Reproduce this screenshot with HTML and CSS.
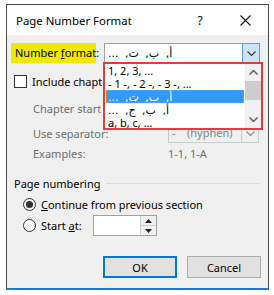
FILE: index.html
```html
<!DOCTYPE html>
<html>
<head>
<meta charset="utf-8">
<link rel="stylesheet" href="styles.css">
</head>
<body>
<div class="window">
  <div class="titlebar">
    <span class="title">Page Number Format</span>
    <span class="help">?</span>
    <span class="close"><svg width="11" height="11" viewBox="0 0 11 11"><path d="M0.5 0.5 L10.5 10.5 M10.5 0.5 L0.5 10.5" stroke="#111" stroke-width="1.1" fill="none"/></svg></span>
  </div>
  <div class="content">
    <div class="row format-row">
      <span class="hl-label">Number <u>f</u>ormat:</span>
      <div class="combo main-combo">
        <span class="combo-text"><span dir="rtl" class="rtl">أ, ب, ت, ...</span></span>
        <span class="combo-btn hover"><svg width="9" height="5" viewBox="0 0 9 5"><path d="M0.5 0.5 L4.5 4.5 L8.5 0.5" stroke="#333" stroke-width="1.1" fill="none"/></svg></span>
        <div class="listbox">
          <div class="items">
            <div class="item">1, 2, 3, ...</div>
            <div class="item">- 1 -, - 2 -, - 3 -, ...</div>
            <div class="item selected"><span dir="rtl" class="rtl">أ, ب, ت, ...</span></div>
            <div class="item"><span dir="rtl" class="rtl">أ, ب, ج, ...</span></div>
            <div class="item last">a, b, c, ...</div>
          </div>
          <div class="scrollbar">
            <span class="arrow"><svg width="9" height="5" viewBox="0 0 9 5"><path d="M0.5 4.5 L4.5 0.5 L8.5 4.5" stroke="#606060" stroke-width="1.5" fill="none"/></svg></span>
            <span class="thumb"></span>
            <span class="track"></span>
            <span class="arrow"><svg width="9" height="5" viewBox="0 0 9 5"><path d="M0.5 0.5 L4.5 4.5 L8.5 0.5" stroke="#606060" stroke-width="1.5" fill="none"/></svg></span>
          </div>
        </div>
      </div>
    </div>
    <div class="row check-row">
      <span class="checkbox"></span>
      <span class="clip check-clip">Include chapter <u>n</u>umber</span>
    </div>
    <div class="row sub-row chapter-row">
      <span class="clip chapter-clip">Chapter starts with style:</span>
    </div>
    <div class="row sub-row sep-row">
      <span class="sub-label">Use separator:</span>
      <div class="combo disabled-combo">
        <span class="combo-text">-&nbsp;&nbsp;&nbsp;&nbsp;(hyphen)</span>
        <span class="combo-btn"><svg width="9" height="5" viewBox="0 0 9 5"><path d="M0.5 0.5 L4.5 4.5 L8.5 0.5" stroke="#888" stroke-width="1.1" fill="none"/></svg></span>
      </div>
    </div>
    <div class="row sub-row ex-row">
      <span class="sub-label">Examples:</span>
      <span class="ex-value">1-1, 1-A</span>
    </div>
    <div class="row group-row">
      <span>Page numbering</span>
      <span class="group-line"></span>
    </div>
    <div class="row radio-row continue-row">
      <span class="radio checked"></span>
      <span><u>C</u>ontinue from previous section</span>
    </div>
    <div class="row radio-row start-row">
      <span class="radio"></span>
      <span class="start-label">Start <u>a</u>t:</span>
      <div class="spin">
        <span class="spin-field"></span>
        <span class="spin-btns">
          <span class="spin-btn"><svg width="7" height="4" viewBox="0 0 7 4"><path d="M0 4 L3.5 0 L7 4 Z" fill="#222"/></svg></span>
          <span class="spin-btn"><svg width="7" height="4" viewBox="0 0 7 4"><path d="M0 0 L3.5 4 L7 0 Z" fill="#222"/></svg></span>
        </span>
      </div>
    </div>
    <div class="row buttons">
      <button class="btn default">OK</button>
      <button class="btn">Cancel</button>
    </div>
  </div>
</div>
</body>
</html>
```
FILE: styles.css
```css
* { box-sizing: border-box; }
html, body { margin: 0; padding: 0; background: #fff; }
body {
  padding: 4px 0 0 6px;
  font-family: "Noto Sans", "Segoe UI", sans-serif;
  font-size: 11px;
  color: #000;
}
.window {
  width: 263px;
  border: 1px solid #4a4a4a;
  border-bottom: 2px solid #1a7ad4;
  background: #f0f0f0;
}
.titlebar {
  height: 30px;
  background: #fff;
  display: flex;
  align-items: center;
  padding-left: 9px;
}
.title { font-size: 11.4px; flex: 1; }
.help { width: 16px; text-align: center; font-size: 12px; margin-right: 32px; }
.close { width: 11px; height: 11px; display: flex; margin-right: 17px; }
.content { padding: 8px 7px 10px 4px; }
.row { display: flex; align-items: center; }
.format-row { height: 20px; }
.hl-label {
  width: 85px; height: 20px; line-height: 20px; background: #f0e800;
  padding-left: 4px; white-space: nowrap;
}
.combo {
  position: relative;
  height: 20px;
  border: 1px solid #a0a0a0;
  background: #fff;
  display: flex;
}
.main-combo { margin-left: 8px; width: 156px; }
.combo-text { flex: 1; line-height: 18px; padding-left: 3px; white-space: nowrap; overflow: hidden; }
.rtl { unicode-bidi: isolate; word-spacing: 3px; font-family: "DejaVu Sans", sans-serif; font-size: 11px; }
.combo-btn { width: 17px; display: flex; align-items: center; justify-content: center; }
.combo-btn.hover { background: #cce4f7; border: 1px solid #569de5; margin: -1px -1px -1px 0; width: 18px; }
.listbox {
  position: absolute;
  left: -2px; top: 18px;
  width: 160px; height: 68px;
  border: 2px solid #e8393f;
  background: #fff;
  display: flex;
  z-index: 5;
  overflow: hidden;
}
.items { flex: 1; padding: 0 1px; overflow: hidden; }
.item { height: 13px; line-height: 13px; padding-left: 2px; white-space: nowrap; }
.item.last { height: 12px; overflow: hidden; }
.item.selected { background: #3399ff; color: #fff; outline: 1px dotted #e88a2e; outline-offset: -1px; }
.scrollbar { width: 16px; background: #f0f0f0; display: flex; flex-direction: column; align-items: center; }
.arrow { height: 17px; display: flex; align-items: center; justify-content: center; }
.thumb { width: 16px; height: 19px; background: #cdcdcd; }
.track { flex: 1; }
.check-row { height: 16px; margin-top: 10px; padding-left: 3px; }
.checkbox { width: 13px; height: 13px; border: 1px solid #333; background: #fff; margin-right: 5px; flex: none; }
.clip { overflow: hidden; white-space: nowrap; }
.check-clip { width: 70px; }
.chapter-clip { width: 68px; }
.sub-row { padding-left: 22px; color: #6d6d6d; }
.sub-label { width: 135px; white-space: nowrap; }
.chapter-row { height: 20px; margin-top: 9px; }
.sep-row { height: 20px; margin-top: 5px; }
.disabled-combo { width: 91px; border-color: #cccccc; background: #f0f0f0; color: #838383; }
.disabled-combo .combo-btn { border-left: 1px solid #cccccc; }
.ex-row { height: 16px; margin-top: 2px; }
.ex-value { color: #6d6d6d; }
.group-row { height: 16px; margin-top: 14px; padding-left: 3px; }
.group-line { flex: 1; height: 1px; background: #dcdcdc; margin-left: 6px; margin-right: 1px; }
.radio-row { padding-left: 12px; }
.continue-row { height: 20px; margin-top: 3px; }
.start-row { height: 21px; margin-top: 1px; }
.radio {
  width: 13px; height: 13px; border: 1px solid #333; border-radius: 50%; flex: none;
  background: #fff; margin-right: 5px; display: flex; align-items: center; justify-content: center;
}
.radio.checked::after { content: ""; width: 7px; height: 7px; border-radius: 50%; background: #333; }
.start-label { width: 52px; }
.spin { display: flex; height: 21px; width: 64px; border: 1px solid #a0a0a0; background: #fff; }
.spin-field { flex: 1; }
.spin-btns { width: 16px; display: flex; flex-direction: column; border-left: 1px solid #d0d0d0; background: #f0f0f0; }
.spin-btn { flex: 1; display: flex; align-items: center; justify-content: center; }
.spin-btn + .spin-btn { border-top: 1px solid #d0d0d0; }
.buttons { justify-content: flex-end; margin-top: 20px; gap: 10px; }
.btn {
  width: 74px; height: 22px; font: inherit; color: #000;
  background: #e1e1e1; border: 1px solid #adadad; padding: 0;
}
.btn.default { border: 2px solid #0078d7; }
```
